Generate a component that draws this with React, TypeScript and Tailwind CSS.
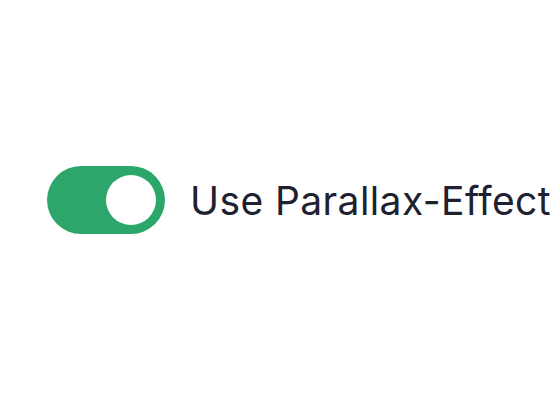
import React, { useState } from 'react';

export default function App() {
  const [enabled, setEnabled] = useState(true);

  return (
    <div className="flex h-[400px] w-[560px] items-center bg-white pl-[47px]" style={{ fontFamily: 'Inter, "Noto Sans", sans-serif' }}>
      <button
        type="button"
        role="switch"
        aria-checked={enabled}
        onClick={() => setEnabled(!enabled)}
        className={`flex h-[68px] w-[118px] shrink-0 items-center rounded-full p-[9px] ${enabled ? 'justify-end bg-[#2ca66a]' : 'justify-start bg-gray-300'}`}
      >
        <span className="block h-[50px] w-[50px] rounded-full bg-white" />
      </button>
      <span className="ml-[25px] whitespace-nowrap text-[39px] leading-none tracking-[0.4px] text-[#1e2130]">Use Parallax-Effect</span>
    </div>
  );
}
